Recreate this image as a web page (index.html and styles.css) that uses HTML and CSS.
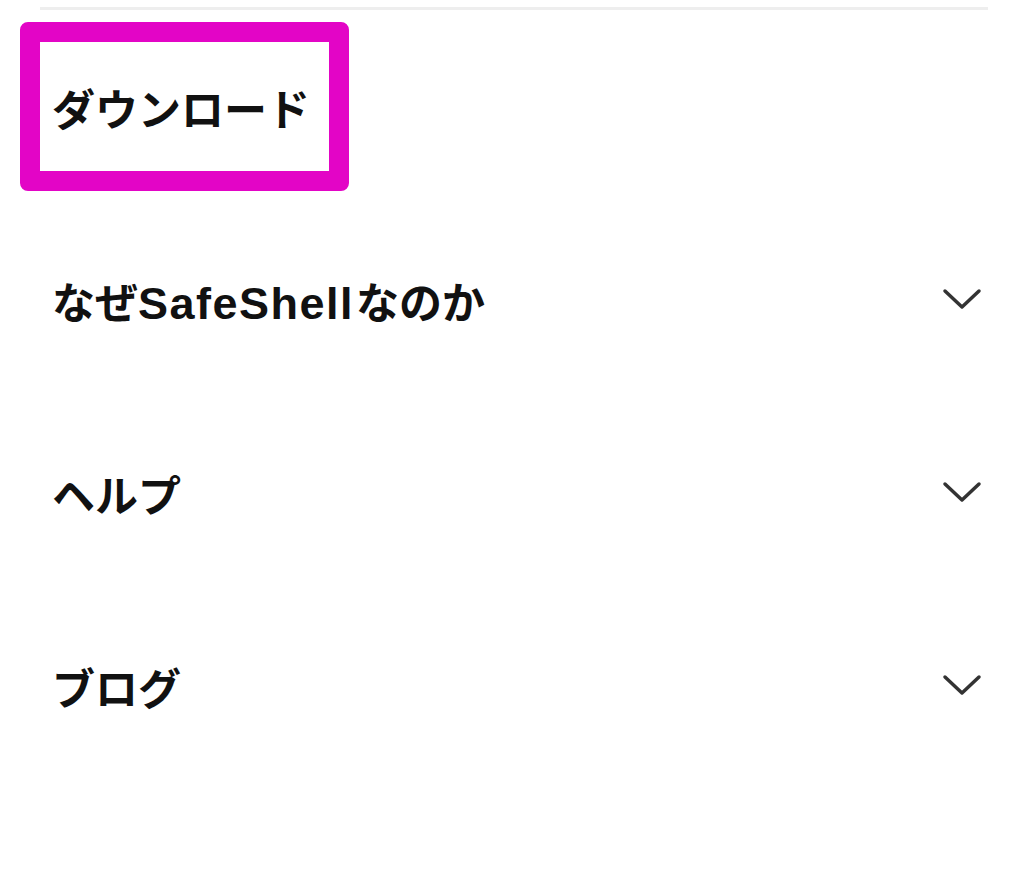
FILE: index.html
```html
<!DOCTYPE html>
<html lang="ja">
<head>
    <meta charset="UTF-8" />
    <meta name="viewport" content="width=device-width, initial-scale=1.0" />
    <title>Menu</title>
    <link rel="stylesheet" href="styles.css">
</head>
<body>
    <nav class="menu">
        <div class="menu-row">
            <a class="menu-link highlighted" href="#">ダウンロード</a>
        </div>
        <div class="menu-row">
            <span class="menu-link">なぜ<span class="latin">SafeShell</span>なのか</span>
            <svg class="chevron" viewBox="0 0 40 24"><path d="M3 3 L20 19 L37 3" /></svg>
        </div>
        <div class="menu-row">
            <span class="menu-link">ヘルプ</span>
            <svg class="chevron" viewBox="0 0 40 24"><path d="M3 3 L20 19 L37 3" /></svg>
        </div>
        <div class="menu-row">
            <span class="menu-link">ブログ</span>
            <svg class="chevron" viewBox="0 0 40 24"><path d="M3 3 L20 19 L37 3" /></svg>
        </div>
    </nav>
</body>
</html>
```

FILE: styles.css
```css
body {
    margin: 0;
    padding: 0;
    background: #fff;
    font-family: "Liberation Sans", "Noto Sans CJK JP", sans-serif;
    color: #111;
}

.menu {
    margin: 7px 36px 0 40px;
    border-top: 3px solid #eeeeee;
}

.menu-row {
    height: 193px;
    display: flex;
    align-items: center;
    justify-content: space-between;
    padding: 0 6px 0 12px;
}

.menu-link {
    font-size: 43px;
    font-weight: 700;
    color: #111;
    text-decoration: none;
}

.latin {
    font-size: 45px;
    letter-spacing: 1.5px;
    margin-right: 2px;
}

.highlighted {
    display: flex;
    align-items: center;
    height: 129px;
    margin-left: -32px;
    padding: 0 19px 0 12px;
    border: 20px solid #e305c6;
    border-radius: 8px;
}

.chevron {
    width: 40px;
    height: 24px;
    fill: none;
    stroke: #333;
    stroke-width: 3.5;
    stroke-linecap: round;
    stroke-linejoin: round;
}
```
